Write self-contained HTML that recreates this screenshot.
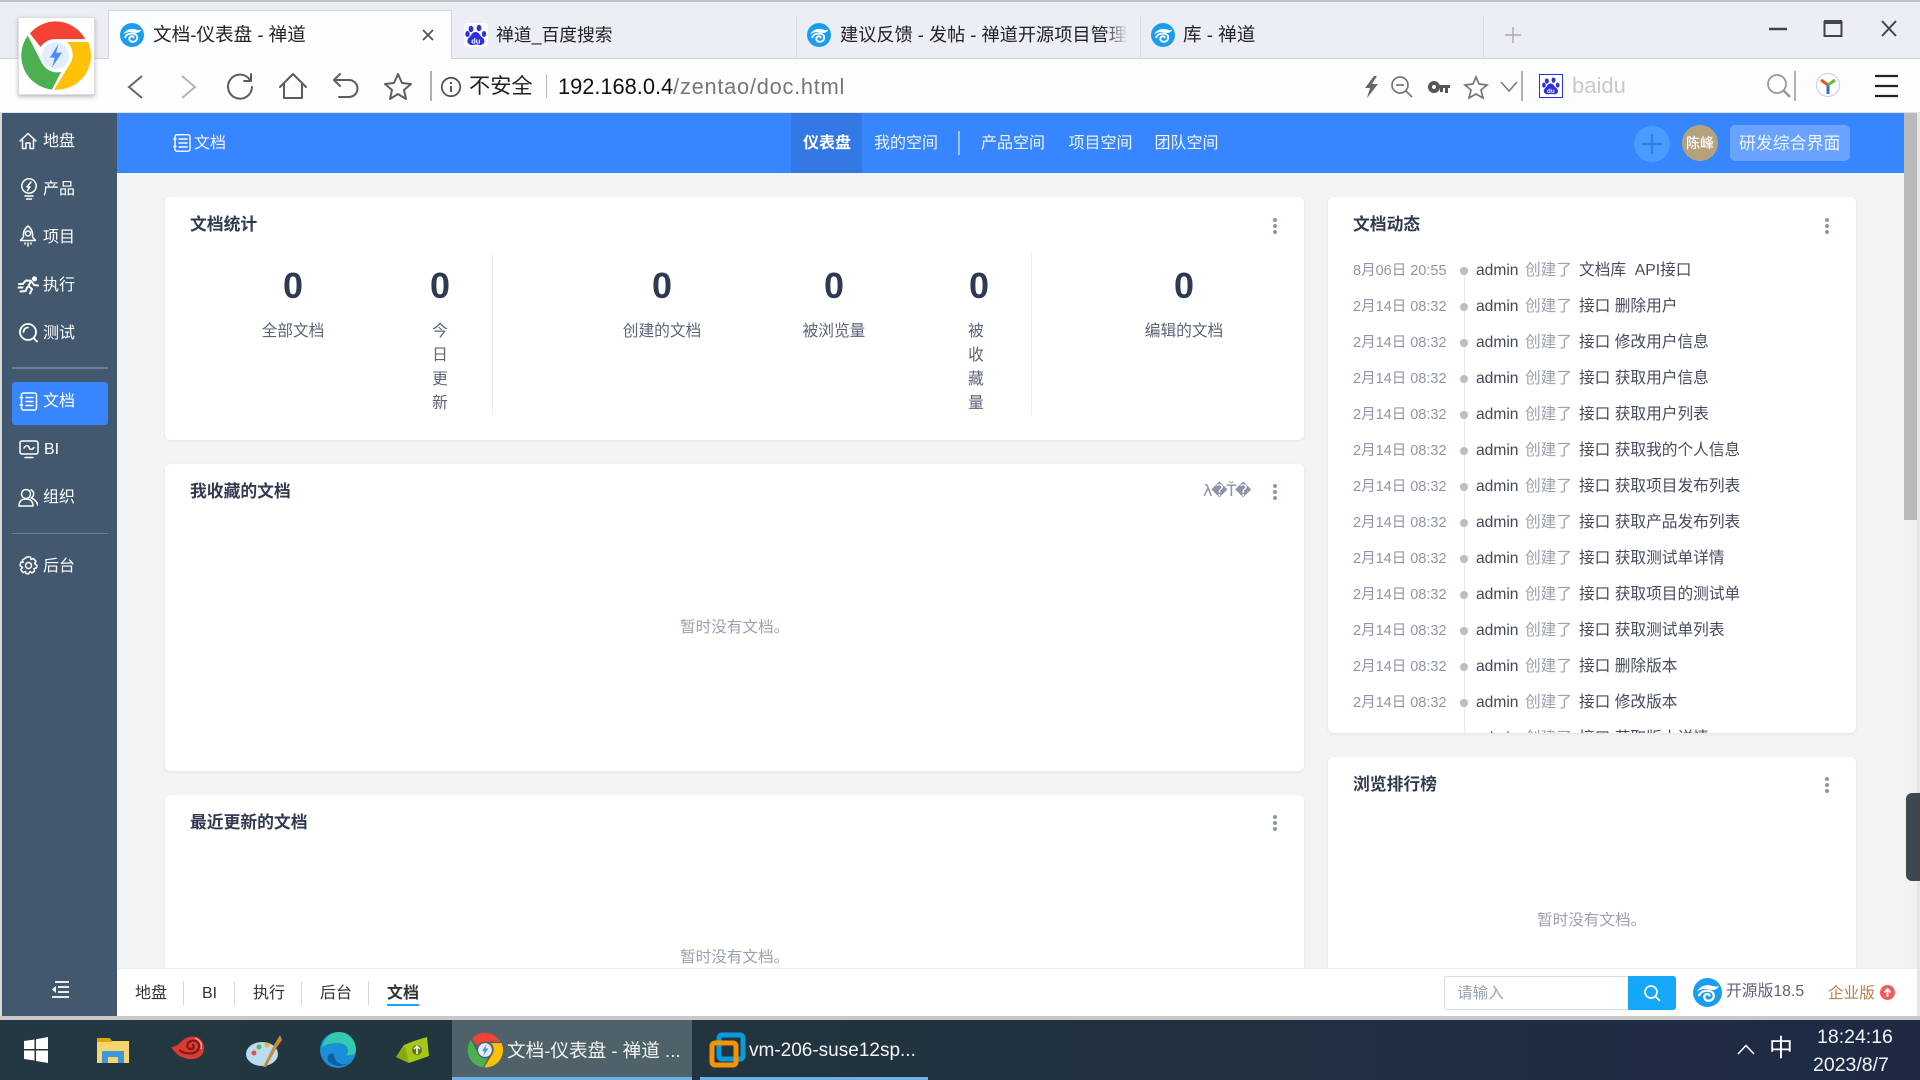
<!DOCTYPE html>
<html lang="zh"><head><meta charset="utf-8"><title>文档-仪表盘 - 禅道</title>
<style>
*{box-sizing:border-box}
html,body{margin:0;padding:0;width:1920px;height:1080px;overflow:hidden;background:#e6e6e6;font-family:"Liberation Sans","Noto Sans CJK SC",sans-serif}
.a{position:absolute}
.t{position:absolute;white-space:nowrap;line-height:24px;height:24px}
svg{position:absolute;overflow:visible}
.nav{color:#fff;font-size:16px;margin-top:1.5px}
.s{fill:none;stroke:#fff;stroke-width:1.5;stroke-linecap:round;stroke-linejoin:round}
.g{fill:none;stroke:#5d5d5d;stroke-width:2;stroke-linecap:round;stroke-linejoin:round}
.card{position:absolute;background:#fff;border-radius:6px;box-shadow:0 1px 3px rgba(40,50,70,.08)}
.ttl{font-size:16.8px;font-weight:700;color:#2f3a50;margin-top:.5px}
.num{font-size:36px;font-weight:700;color:#2e3a53;width:60px;text-align:center;height:40px;line-height:40px}
.lb{font-size:15.7px;color:#5b6478;text-align:center;width:120px;margin-top:2px}
.d{position:absolute;width:4px;height:4px;border-radius:50%;background:#8f96aa}
.empty{font-size:15.6px;color:#9aa1b0;margin-top:1.5px}
.dt{font-size:14.5px;color:#8e95a7;margin-top:.5px}
.ad{font-size:15.6px;color:#3f4759;margin-top:.5px}
.cr{font-size:15.7px;color:#9aa1b0;margin-top:.5px}
.ob{font-size:15.7px;color:#454c5e;margin-top:.5px}
.dot{position:absolute;width:8px;height:8px;border-radius:50%;background:#bdbdbd}
.hn{color:#fff;font-size:16px;opacity:.92;margin-top:1.5px}
.tabt{font-size:18.6px;color:#222}
.sep{position:absolute;background:#d8d8d8;width:1px}
.bt{font-size:16px;color:#333;margin-top:1.5px}
.tk{color:#f2f4f5;margin-top:.5px}
</style></head><body>
<svg width="0" height="0" style="position:absolute"><defs>
<symbol id="zt" viewBox="0 0 24 24"><circle cx="12" cy="12" r="12" fill="#1a9df0"/><path d="M3 11.500C5.500 7 10 5.500 13.500 6C16.500 6.500 19 7.800 21.500 6.500C20 10 16 10.500 13.500 9.500C10.500 8.500 6 9 3 11.500Z" fill="#fff"/><path d="M5 15C6 10.500 12 9.500 15.500 11.500C18.500 13.500 17.500 18.500 13 18.800C10 19 8.300 16 10 14C11.500 12.500 14 13.500 13.500 15.300" fill="none" stroke="#fff" stroke-width="1.900"/></symbol>
<symbol id="du" viewBox="0 0 24 24"><ellipse cx="7" cy="6" rx="2.4" ry="3.2" fill="#2932e1"/><ellipse cx="15" cy="5" rx="2.4" ry="3.2" fill="#2932e1"/><ellipse cx="3.500" cy="11" rx="2.200" ry="3" fill="#2932e1"/><ellipse cx="20" cy="11" rx="2.200" ry="3" fill="#2932e1"/><path d="M11.500 9C8 9 7 13 4.500 15C2 18 4 22 8 22C10 22 13 21 16 22C20 22 22 18 19 15C16 13 15 9 11.500 9Z" fill="#2932e1"/><text x="11.800" y="20.500" font-size="7.500" font-weight="700" text-anchor="middle" fill="#fff" font-family="Liberation Sans">du</text></symbol>
<symbol id="ch" viewBox="0 0 100 100"><path d="M50 2A48 48 0 0 1 92 27H50A24 24 0 0 0 29 38L14 19A48 48 0 0 1 50 2Z" fill="#f44336"/><path d="M11 22L31 61A24 24 0 0 0 58 73L45 98A48 48 0 0 1 11 22Z" fill="#4caf50"/><path d="M96 31A48 48 0 0 1 48 98L69 64A24 24 0 0 0 66 31Z" fill="#ffc107"/><circle cx="50" cy="50" r="19" fill="#e3eefc"/><path d="M54 34L42 53H49L45 67L59 46H51Z" fill="#4a8cf7"/></symbol>
</defs></svg>

<!-- browser top -->
<div class="a" style="left:0;top:0;width:1920px;height:113px;background:#fcfdff"></div>
<div class="a" style="left:0;top:0;width:1920px;height:59px;background:#ebeef5;border-top:2px solid #bfc2c8;border-bottom:1px solid #cfd2d8"></div>
<div class="a" style="left:0;top:112px;width:1920px;height:1px;background:#e3e4e8"></div>
<div class="a" style="left:108px;top:10px;width:344px;height:49px;background:#fcfdff;border:1px solid #d3d6dc;border-bottom:none"></div>
<div class="a" style="left:796px;top:16px;width:1px;height:42px;background:#dadde3"></div>
<div class="a" style="left:1140px;top:16px;width:1px;height:42px;background:#dadde3"></div>
<div class="a" style="left:1483px;top:16px;width:1px;height:42px;background:#dadde3"></div>
<svg style="left:120px;top:23px" width="24" height="24"><use href="#zt"/></svg>
<div class="t tabt" style="left:153px;top:23px">文档-仪表盘 - 禅道</div>
<svg style="left:422px;top:29px" width="12" height="12"><path d="M1 1L11 11M11 1L1 11" stroke="#555" stroke-width="1.8" fill="none"/></svg>
<div class="a" style="left:464px;top:23px;width:24px;height:24px;background:#fff;border-radius:3px"></div>
<svg style="left:464px;top:23px" width="24" height="24"><use href="#du"/></svg>
<div class="t tabt" style="left:496px;top:23px;font-size:17.8px">禅道_百度搜索</div>
<svg style="left:807px;top:23px" width="24" height="24"><use href="#zt"/></svg>
<div class="a" style="left:840px;top:20px;width:288px;height:30px;overflow:hidden"><div class="t tabt" style="left:0;top:3px;font-size:18.2px">建议反馈 - 发帖 - 禅道开源项目管理</div><div class="a" style="right:0;top:0;width:24px;height:30px;background:linear-gradient(90deg,rgba(235,238,245,0),#ebeef5)"></div></div>
<svg style="left:1151px;top:23px" width="24" height="24"><use href="#zt"/></svg>
<div class="t tabt" style="left:1183px;top:23px">库 - 禅道</div>
<svg style="left:1505px;top:27px" width="16" height="16"><path d="M8 0V16M0 8H16" stroke="#aaa" stroke-width="1.4"/></svg>
<svg style="left:1769px;top:22px" width="130" height="18"><path d="M0 7H18" stroke="#444" stroke-width="2.4"/><rect x="55.5" y="0" width="17" height="14" fill="none" stroke="#444" stroke-width="2"/><path d="M55 0H73" stroke="#444" stroke-width="4"/><path d="M113 -1L127 14M127 -1L113 14" stroke="#444" stroke-width="2"/></svg>

<!-- logo -->
<div class="a" style="left:18px;top:17px;width:77px;height:78px;background:#fff;border:1px solid #ddd;box-shadow:0 2px 4px rgba(0,0,0,.25)"></div>
<svg style="left:20px;top:20px" width="71" height="71"><use href="#ch"/></svg>

<!-- toolbar left -->
<svg style="left:127px;top:75px" width="18" height="24"><path d="M15 1L2 12L15 23" fill="none" stroke="#666" stroke-width="2"/></svg>
<svg style="left:181px;top:75px" width="16" height="24"><path d="M1 1L14 12L1 23" fill="none" stroke="#b4b4b4" stroke-width="2"/></svg>
<svg style="left:226px;top:73px" width="28" height="26"><path class="g" d="M24 7A12 12 0 1 0 26 14M25 1V8H18"/></svg>
<svg style="left:279px;top:73px" width="28" height="26"><path class="g" d="M1 14L14 1L27 14M5 11V25H23V11"/></svg>
<svg style="left:333px;top:73px" width="26" height="26"><path class="g" d="M1 7H16A8.500 8.500 0 0 1 16 24H6M7 1L1 7L7 13"/></svg>
<svg style="left:383px;top:72px" width="30" height="28"><path class="g" d="M15 2L19 11L28 12L21 18L23 27L15 22L7 27L9 18L2 12L11 11Z"/></svg>
<div class="a" style="left:430px;top:71px;width:2px;height:30px;background:#b0b0b0"></div>
<svg style="left:441px;top:77px" width="20" height="20"><circle cx="10" cy="10" r="9.200" fill="none" stroke="#555" stroke-width="1.800"/><path d="M10 9V15M10 5V7" stroke="#555" stroke-width="2"/></svg>
<div class="t" style="left:469px;top:75px;font-size:21.2px;color:#222">不安全</div>
<div class="a" style="left:546px;top:74px;width:1px;height:24px;background:#bbb"></div>
<div class="t" style="left:558px;top:74px;font-size:21.8px;line-height:26px;height:26px;color:#111">192.168.0.4<span style="color:#777;letter-spacing:.75px">/zentao/doc.html</span></div>

<!-- toolbar right -->
<svg style="left:1364px;top:76px" width="16" height="22"><path d="M10 0L1 12H6L3 22L14 8H8L13 0Z" fill="#666"/></svg>
<svg style="left:1391px;top:76px" width="22" height="22"><circle cx="9" cy="9" r="8" fill="none" stroke="#777" stroke-width="1.700"/><path d="M5 9H13M15 15L21 21" stroke="#777" stroke-width="1.700"/></svg>
<svg style="left:1428px;top:80px" width="22" height="14"><circle cx="6" cy="7" r="4" fill="none" stroke="#555" stroke-width="4"/><path d="M10 5H22V8H20V13H17V8H15V12H12V8H10Z" fill="#555"/></svg>
<svg style="left:1464px;top:75px" width="24" height="24"><path d="M12 2L15 9L23 10L17 15L19 23L12 19L5 23L7 15L1 10L9 9Z" fill="none" stroke="#777" stroke-width="1.700"/></svg>
<svg style="left:1500px;top:81px" width="18" height="11"><path d="M1 1L9 10L17 1" fill="none" stroke="#777" stroke-width="1.500"/></svg>
<div class="a" style="left:1521px;top:71px;width:2px;height:30px;background:#b0b0b0"></div>
<div class="a" style="left:1539px;top:74px;width:24px;height:24px;background:#fff;border:1px solid #2932e1"></div>
<svg style="left:1541px;top:76px" width="20" height="20"><use href="#du"/></svg>
<div class="t" style="left:1572px;top:74px;font-size:22px;line-height:24px;color:#c9c9c9">baidu</div>
<svg style="left:1767px;top:74px" width="24" height="24"><circle cx="10" cy="10" r="9" fill="none" stroke="#999" stroke-width="1.800"/><path d="M16 16L23 23" stroke="#999" stroke-width="2.600"/></svg>
<div class="a" style="left:1794px;top:71px;width:2px;height:30px;background:#b0b0b0"></div>
<svg style="left:1816px;top:73px" width="24" height="24"><circle cx="12" cy="12" r="11.500" fill="#fff" stroke="#ccc"/><path d="M12 12V21" stroke="#2a6fe8" stroke-width="3"/><path d="M12 12L5 7" stroke="#f0501e" stroke-width="3"/><path d="M12 12L19 7" stroke="#5cc23a" stroke-width="3"/></svg>
<svg style="left:1875px;top:74px" width="24" height="24"><path d="M0 2H23M0 12H23M0 22H23" stroke="#222" stroke-width="2.200"/></svg>

<!-- content bg -->
<div class="a" style="left:117px;top:113px;width:1787px;height:856px;background:#f3f4f6"></div>

<!-- header -->
<div class="a" style="left:117px;top:113px;width:1787px;height:60px;background:#3785ff"></div>
<svg style="left:173px;top:134px" width="19" height="18"><rect x="2" y="0.700" width="15" height="16.500" rx="2" class="s" style="stroke-width:1.400"/><path class="s" style="stroke-width:1.400" d="M6 5H14M6 9H14M6 13H14M0.800 5H3M0.800 12.500H3"/></svg>
<div class="t hn" style="left:194px;top:130px">文档</div>
<div class="a" style="left:791px;top:113px;width:71px;height:60px;background:#3478e6"></div>
<div class="t" style="left:803px;top:130px;font-size:16px;font-weight:700;color:#fff;margin-top:1.500px">仪表盘</div>
<div class="t hn" style="left:874px;top:130px">我的空间</div>
<div class="a" style="left:958px;top:131px;width:2px;height:24px;background:rgba(255,255,255,.5)"></div>
<div class="t hn" style="left:981px;top:130px">产品空间</div>
<div class="t hn" style="left:1068.500px;top:130px">项目空间</div>
<div class="t hn" style="left:1154.500px;top:130px">团队空间</div>
<div class="a" style="left:1634px;top:126px;width:36px;height:36px;border-radius:50%;background:#4a9cff"></div>
<svg style="left:1640px;top:132px" width="24" height="24"><path d="M12 2V22M2 12H22" stroke="#2f80ef" stroke-width="2.400"/></svg>
<div class="a" style="left:1682px;top:125px;width:36px;height:36px;border-radius:50%;background:#b5a27c"></div>
<div class="t" style="left:1686px;top:131px;font-size:14px;color:#fff;font-weight:500">陈峰</div>
<div class="a" style="left:1730px;top:125px;width:120px;height:36px;border-radius:5px;background:#69a3ff"></div>
<div class="t" style="left:1739px;top:130px;font-size:16.900px;color:#eef4ff;margin-top:1.500px">研发综合界面</div>

<!-- scrollbar -->
<div class="a" style="left:1904px;top:113px;width:13px;height:856px;background:#f1f1f1"></div>
<div class="a" style="left:1904px;top:113px;width:13px;height:407px;background:#b9b9b9"></div>
<div class="a" style="left:1906px;top:793px;width:14px;height:88px;background:#3e4650;border-radius:6px 0 0 6px"></div>

<!-- sidebar -->
<div class="a" style="left:0;top:113px;width:117px;height:903px;background:#42586f;border-left:2px solid #d8d8d8"></div>
<div class="a" style="left:12px;top:382px;width:96px;height:43px;background:#3785ff;border-radius:3px"></div>
<div class="a" style="left:12px;top:367px;width:96px;height:2px;background:#6a7d91"></div>
<div class="a" style="left:12px;top:533px;width:96px;height:1px;background:#6a7d91"></div>

<svg style="left:19px;top:132px" width="18" height="18"><path class="s" d="M1 9L9 1.500L17 9M3.500 7.500V16.500H7V11H11V16.500H14.500V7.500"/></svg>
<div class="t nav" style="left:43px;top:128.500px">地盘</div>
<svg style="left:20px;top:178px" width="18" height="22"><circle class="s" cx="9" cy="8" r="7.200"/><path class="s" d="M5 18H13M6.500 21H11.500M11 4L7 9H10L7.500 12.500"/></svg>
<div class="t nav" style="left:43px;top:176.500px">产品</div>
<svg style="left:19px;top:225px" width="18" height="22"><path class="s" d="M9 1C5 4 4 8 4.500 12L1.500 15.500H16.500L13.500 12C14 8 13 4 9 1Z"/><circle class="s" cx="9" cy="8.500" r="2.500"/><path class="s" d="M6 18V19M9 18V21M12 18V19"/></svg>
<div class="t nav" style="left:43px;top:224.500px">项目</div>
<svg style="left:18px;top:276px" width="21" height="18"><circle cx="16.500" cy="2.800" r="2.600" fill="#fff"/><path d="M5 7.500L8 4.500L13 4.800L10.500 10L14 13L12 17.500M14 6L16 9L20 9.500M9.500 11L7.500 15L2.500 15.500M1 8H5M0.500 11.500H4.500" fill="none" stroke="#fff" stroke-width="2" stroke-linecap="round" stroke-linejoin="round"/></svg>
<div class="t nav" style="left:43px;top:272.500px">执行</div>
<svg style="left:19px;top:323px" width="20" height="20"><circle class="s" style="stroke-width:1.800" cx="9" cy="9" r="8"/><path class="s" style="stroke-width:1.800" d="M14.500 15L18 18.500M4.500 9A4.500 4.500 0 0 1 9 4.500"/></svg>
<div class="t nav" style="left:43px;top:320.500px">测试</div>
<svg style="left:19px;top:392px" width="19" height="19"><rect class="s" x="2.500" y="1" width="15" height="17" rx="2"/><path class="s" d="M7 5.500H14M7 9.500H14M7 13.500H14M1 5.500H3.500M1 13H3.500"/></svg>
<div class="t nav" style="left:43px;top:388.500px">文档</div>
<svg style="left:19px;top:440px" width="20" height="19"><rect class="s" x="1" y="1" width="18" height="13" rx="2"/><path class="s" d="M5 8C7 5 9 5 10 7.500C11 10 13 10 15 7.500M6 17.500H14"/></svg>
<div class="t nav" style="left:44px;top:436.500px">BI</div>
<svg style="left:18px;top:488px" width="21" height="19"><circle class="s" cx="8" cy="6" r="4.500"/><path class="s" d="M1 18C1 13 4 11 8 11C12 11 15 13 15 18H1ZM13 1.800A4.500 4.500 0 0 1 13 10C16 11 19 13 19.500 17"/></svg>
<div class="t nav" style="left:43px;top:484.500px">组织</div>
<svg style="left:19px;top:556px" width="19" height="19"><path class="s" d="M7.500 1H11.500L12 3.500L14.500 2.500L17 5.500L15.500 7.500L18 9.500L17.500 12L15 12.500L15.500 15L13 17L11 15.500L9.500 18L7 17.500L6.500 15.500L4 16.500L1.800 13.500L3.500 11.500L1 9.500L1.800 6L4 6.500L3.500 4L6.500 2Z"/><circle class="s" cx="9.500" cy="9.500" r="3"/></svg>
<div class="t nav" style="left:43px;top:553.500px">后台</div>
<svg style="left:51px;top:981px" width="18" height="17"><path d="M4 1H18M7 6H18M7 11H18M1 16H18" stroke="#fff" stroke-width="1.800" fill="none"/><path d="M5 5L1 8.500L5 12Z" fill="#fff"/></svg>

<!-- card 1 -->
<div class="card" style="left:165px;top:197px;width:1139px;height:243px"></div>
<div class="t ttl" style="left:190px;top:212px">文档统计</div>
<div class="d" style="left:1273px;top:218px"></div><div class="d" style="left:1273px;top:224px"></div><div class="d" style="left:1273px;top:230px"></div>
<div class="a" style="left:492px;top:252px;width:1px;height:163px;background:#eceef1"></div>
<div class="a" style="left:1031px;top:252px;width:1px;height:163px;background:#eceef1"></div>
<div class="t num" style="left:263px;top:266px">0</div>
<div class="t num" style="left:410px;top:266px">0</div>
<div class="t num" style="left:632px;top:266px">0</div>
<div class="t num" style="left:804px;top:266px">0</div>
<div class="t num" style="left:949px;top:266px">0</div>
<div class="t num" style="left:1154px;top:266px">0</div>
<div class="t lb" style="left:233px;top:318px">全部文档</div>
<div class="t lb" style="left:380px;top:318px">今</div>
<div class="t lb" style="left:380px;top:342px">日</div>
<div class="t lb" style="left:380px;top:366px">更</div>
<div class="t lb" style="left:380px;top:390px">新</div>
<div class="t lb" style="left:602px;top:318px">创建的文档</div>
<div class="t lb" style="left:774px;top:318px">被浏览量</div>
<div class="t lb" style="left:916px;top:318px">被</div>
<div class="t lb" style="left:916px;top:342px">收</div>
<div class="t lb" style="left:916px;top:366px">藏</div>
<div class="t lb" style="left:916px;top:390px">量</div>
<div class="t lb" style="left:1124px;top:318px">编辑的文档</div>

<!-- card 2 -->
<div class="card" style="left:165px;top:464px;width:1139px;height:307px"></div>
<div class="t ttl" style="left:190px;top:479px">我收藏的文档</div>
<div class="t" style="left:1203px;top:479px;font-family:'DejaVu Sans',sans-serif;font-size:16px;letter-spacing:-1.2px;color:#8a92a6">λ�Ť�</div>
<div class="d" style="left:1273px;top:484px"></div><div class="d" style="left:1273px;top:490px"></div><div class="d" style="left:1273px;top:496px"></div>
<div class="t empty" style="left:680px;top:614px">暂时没有文档。</div>

<!-- card 3 -->
<div class="card" style="left:165px;top:795px;width:1139px;height:260px"></div>
<div class="t ttl" style="left:190px;top:810px">最近更新的文档</div>
<div class="d" style="left:1273px;top:815px"></div><div class="d" style="left:1273px;top:821px"></div><div class="d" style="left:1273px;top:827px"></div>
<div class="t empty" style="left:680px;top:944px">暂时没有文档。</div>

<!-- right card 1 -->
<div class="card" style="left:1328px;top:197px;width:528px;height:536px"></div>
<div class="t ttl" style="left:1353px;top:212px">文档动态</div>
<div class="d" style="left:1825px;top:218px"></div><div class="d" style="left:1825px;top:224px"></div><div class="d" style="left:1825px;top:230px"></div>
<div class="a" style="left:1328px;top:197px;width:528px;height:536px;overflow:hidden;border-radius:6px">
<div class="a" style="left:136px;top:74px;width:1px;height:470px;background:#e8e8e8"></div>
<div class="t dt" style="left:25px;top:61px">8月06日 20:55</div><div class="dot" style="left:132px;top:70px"></div><div class="t ad" style="left:148px;top:61px">admin</div><div class="t cr" style="left:197px;top:61px">创建了</div><div class="t ob" style="left:251px;top:61px">文档库&nbsp; API接口</div>
<div class="t dt" style="left:25px;top:97px">2月14日 08:32</div><div class="dot" style="left:132px;top:106px"></div><div class="t ad" style="left:148px;top:97px">admin</div><div class="t cr" style="left:197px;top:97px">创建了</div><div class="t ob" style="left:251px;top:97px">接口 删除用户</div>
<div class="t dt" style="left:25px;top:133px">2月14日 08:32</div><div class="dot" style="left:132px;top:142px"></div><div class="t ad" style="left:148px;top:133px">admin</div><div class="t cr" style="left:197px;top:133px">创建了</div><div class="t ob" style="left:251px;top:133px">接口 修改用户信息</div>
<div class="t dt" style="left:25px;top:169px">2月14日 08:32</div><div class="dot" style="left:132px;top:178px"></div><div class="t ad" style="left:148px;top:169px">admin</div><div class="t cr" style="left:197px;top:169px">创建了</div><div class="t ob" style="left:251px;top:169px">接口 获取用户信息</div>
<div class="t dt" style="left:25px;top:205px">2月14日 08:32</div><div class="dot" style="left:132px;top:214px"></div><div class="t ad" style="left:148px;top:205px">admin</div><div class="t cr" style="left:197px;top:205px">创建了</div><div class="t ob" style="left:251px;top:205px">接口 获取用户列表</div>
<div class="t dt" style="left:25px;top:241px">2月14日 08:32</div><div class="dot" style="left:132px;top:250px"></div><div class="t ad" style="left:148px;top:241px">admin</div><div class="t cr" style="left:197px;top:241px">创建了</div><div class="t ob" style="left:251px;top:241px">接口 获取我的个人信息</div>
<div class="t dt" style="left:25px;top:277px">2月14日 08:32</div><div class="dot" style="left:132px;top:286px"></div><div class="t ad" style="left:148px;top:277px">admin</div><div class="t cr" style="left:197px;top:277px">创建了</div><div class="t ob" style="left:251px;top:277px">接口 获取项目发布列表</div>
<div class="t dt" style="left:25px;top:313px">2月14日 08:32</div><div class="dot" style="left:132px;top:322px"></div><div class="t ad" style="left:148px;top:313px">admin</div><div class="t cr" style="left:197px;top:313px">创建了</div><div class="t ob" style="left:251px;top:313px">接口 获取产品发布列表</div>
<div class="t dt" style="left:25px;top:349px">2月14日 08:32</div><div class="dot" style="left:132px;top:358px"></div><div class="t ad" style="left:148px;top:349px">admin</div><div class="t cr" style="left:197px;top:349px">创建了</div><div class="t ob" style="left:251px;top:349px">接口 获取测试单详情</div>
<div class="t dt" style="left:25px;top:385px">2月14日 08:32</div><div class="dot" style="left:132px;top:394px"></div><div class="t ad" style="left:148px;top:385px">admin</div><div class="t cr" style="left:197px;top:385px">创建了</div><div class="t ob" style="left:251px;top:385px">接口 获取项目的测试单</div>
<div class="t dt" style="left:25px;top:421px">2月14日 08:32</div><div class="dot" style="left:132px;top:430px"></div><div class="t ad" style="left:148px;top:421px">admin</div><div class="t cr" style="left:197px;top:421px">创建了</div><div class="t ob" style="left:251px;top:421px">接口 获取测试单列表</div>
<div class="t dt" style="left:25px;top:457px">2月14日 08:32</div><div class="dot" style="left:132px;top:466px"></div><div class="t ad" style="left:148px;top:457px">admin</div><div class="t cr" style="left:197px;top:457px">创建了</div><div class="t ob" style="left:251px;top:457px">接口 删除版本</div>
<div class="t dt" style="left:25px;top:493px">2月14日 08:32</div><div class="dot" style="left:132px;top:502px"></div><div class="t ad" style="left:148px;top:493px">admin</div><div class="t cr" style="left:197px;top:493px">创建了</div><div class="t ob" style="left:251px;top:493px">接口 修改版本</div>
<div class="t ad" style="left:148px;top:529px">admin</div><div class="t cr" style="left:197px;top:529px">创建了</div><div class="t ob" style="left:251px;top:529px">接口 获取版本详情</div>
</div>

<!-- right card 2 -->
<div class="card" style="left:1328px;top:757px;width:528px;height:300px"></div>
<div class="t ttl" style="left:1353px;top:772px">浏览排行榜</div>
<div class="d" style="left:1825px;top:777px"></div><div class="d" style="left:1825px;top:783px"></div><div class="d" style="left:1825px;top:789px"></div>
<div class="t empty" style="left:1537px;top:907px">暂时没有文档。</div>

<!-- bottom bar -->
<div class="a" style="left:117px;top:968px;width:1800px;height:48px;background:#fff;border-top:1px solid #e9ebf0"></div>
<div class="t bt" style="left:135px;top:980px">地盘</div>
<div class="sep" style="left:183px;top:981px;height:24px"></div>
<div class="t bt" style="left:202px;top:980px">BI</div>
<div class="sep" style="left:234px;top:981px;height:24px"></div>
<div class="t bt" style="left:253px;top:980px">执行</div>
<div class="sep" style="left:301px;top:981px;height:24px"></div>
<div class="t bt" style="left:320px;top:980px">后台</div>
<div class="sep" style="left:368px;top:981px;height:24px"></div>
<div class="t bt" style="left:387px;top:980px;font-weight:700">文档</div>
<div class="a" style="left:387px;top:1004px;width:32px;height:2px;background:#16a8f8"></div>
<div class="a" style="left:1444px;top:976px;width:186px;height:34px;border:1px solid #d9dbe0;border-radius:3px 0 0 3px;background:#fff"></div>
<div class="t" style="left:1457px;top:982px;font-size:15.600px;color:#9aa1b0">请输入</div>
<div class="a" style="left:1628px;top:976px;width:48px;height:34px;background:#16a8f8;border-radius:0 3px 3px 0"></div>
<svg style="left:1644px;top:985px" width="17" height="17"><circle cx="7" cy="7" r="6" fill="none" stroke="#fff" stroke-width="1.700"/><path d="M11.500 11.500L16 16" stroke="#fff" stroke-width="1.700"/></svg>
<svg style="left:1693px;top:978px" width="29" height="29"><use href="#zt"/></svg>
<div class="t" style="left:1726px;top:980px;font-size:15.800px;color:#5b6478">开源版18.5</div>
<div class="t" style="left:1828px;top:982px;font-size:15.600px;color:#b97f4e">企业版</div>
<div class="a" style="left:1880px;top:985px;width:15px;height:15px;border-radius:50%;background:#f55a5a"></div>
<svg style="left:1880px;top:985px" width="15" height="15"><path d="M7.500 12V5M4.500 7.500L7.500 4L10.500 7.500" stroke="#fff" stroke-width="1.800" fill="none"/></svg>

<!-- taskbar -->
<div class="a" style="left:0;top:1016px;width:1920px;height:4px;background:#c8c8c8"></div>
<div class="a" style="left:0;top:1020px;width:1920px;height:60px;background:linear-gradient(90deg,#233842 0%,#22343f 40%,#1e2a44 100%)"></div>
<svg style="left:24px;top:1037px" width="24" height="26"><path d="M0 4L10.500 2.500V12H0ZM12 2.200L24 0V12H12ZM0 13.500H10.500V23.500L0 22ZM12 13.500H24V26L12 24Z" fill="#fff"/></svg>
<svg style="left:97px;top:1037px" width="32" height="27"><path d="M0 2H13L15 4H32V26H0Z" fill="#f8d56a"/><path d="M0 1H13L15 5H0Z" fill="#dfa40f"/><path d="M5 14H27V26H21V20H11V26H5Z" fill="#3c97dd"/></svg>
<svg style="left:171px;top:1035px" width="34" height="30"><path d="M0 12C8 12 10 4 18 2C27 0 33 6 33 13C33 21 26 25 18 24C9 23 4 18 0 12Z" fill="#dc3b32"/><path d="M8 15C12 18 22 21 27 15C31 9 25 4 20 6C15 8 15 14 20 14C23 14 24 10 21 9.500" fill="none" stroke="#7d1a1a" stroke-width="2.200"/><path d="M24 3C29 5 31 9 30 14" fill="none" stroke="#f59a92" stroke-width="1.500"/></svg>
<svg style="left:246px;top:1033px" width="36" height="35"><ellipse cx="16" cy="21" rx="16" ry="12" fill="#b9dcef"/><circle cx="8" cy="20" r="2.500" fill="#d9534f"/><circle cx="13" cy="14" r="2.500" fill="#5cb85c"/><circle cx="21" cy="12" r="2.500" fill="#f0ad4e"/><path d="M34 2L28 12L17 34L20 34L31 14L36 7Z" fill="#c98a3a"/></svg>
<svg style="left:320px;top:1032px" width="36" height="36"><circle cx="18" cy="18" r="18" fill="#1b8fd6"/><path d="M2 16C4 5 12 0 19 0C29 0 36 8 36 18C36 23 30 24 26 23C31 19 27 11 18 11C10 11 4 13 2 16Z" fill="#33c8b0"/><path d="M14 22C14 30 22 35 30 31C24 34 16 36 9 30C6 26 8 20 14 22Z" fill="#0f5ca8"/></svg>
<svg style="left:396px;top:1036px" width="33" height="28"><path d="M8 9L18 5L31 1L33 20L13 27L0 21Z" fill="#a8c617"/><path d="M0 21L9 10L13 27Z" fill="#8aa812"/><circle cx="21" cy="14" r="5" fill="#5d7a10"/><path d="M21 18V11M18 13L21 10L24 13" stroke="#fff" stroke-width="1.500" fill="none"/></svg>
<div class="a" style="left:452px;top:1020px;width:240px;height:60px;background:#4f6269"></div>
<div class="a" style="left:452px;top:1077px;width:240px;height:3px;background:#6cb2e8"></div>
<svg style="left:467px;top:1032px" width="36" height="36"><use href="#ch"/></svg>
<div class="t tk" style="left:507px;top:1037px;font-size:18.600px;line-height:26px;height:26px">文档-仪表盘 - 禅道 ...</div>
<div class="a" style="left:700px;top:1077px;width:228px;height:3px;background:#6cb2e8"></div>
<svg style="left:709px;top:1032px" width="36" height="36"><rect x="10" y="3" width="24" height="24" rx="3" fill="none" stroke="#0a9bdc" stroke-width="5"/><rect x="3" y="11" width="24" height="22" rx="3" fill="none" stroke="#f39400" stroke-width="5"/></svg>
<div class="t tk" style="left:749px;top:1037px;font-size:19px;line-height:26px;height:26px">vm-206-suse12sp...</div>
<svg style="left:1737px;top:1044px" width="18" height="11"><path d="M1 10L9 1.500L17 10" fill="none" stroke="#fff" stroke-width="1.500"/></svg>
<div class="t" style="left:1769px;top:1036px;font-size:24px;color:#fff;line-height:26px;height:26px">中</div>
<div class="t tk" style="left:1817px;top:1024px;font-size:19.500px">18:24:16</div>
<div class="t tk" style="left:1813px;top:1052px;font-size:19.500px">2023/8/7</div>
</body></html>
